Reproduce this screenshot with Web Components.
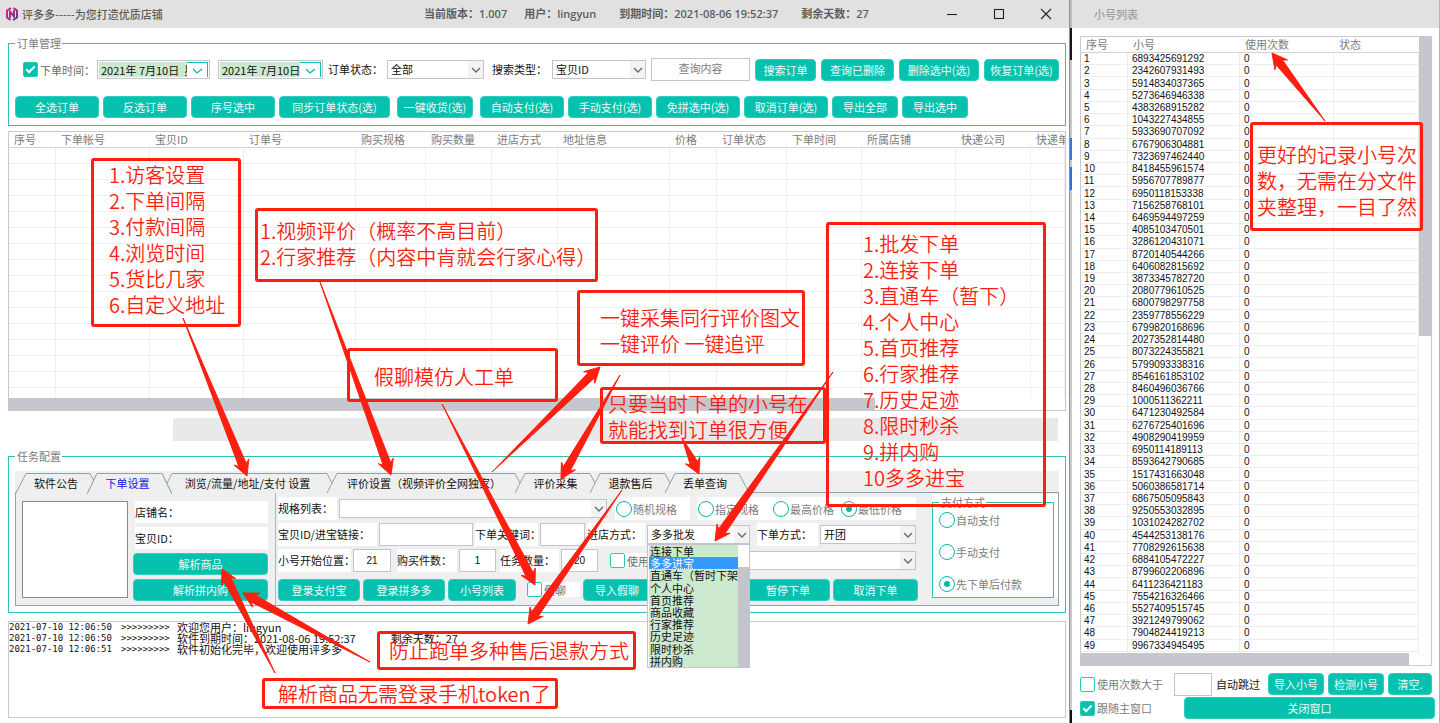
<!DOCTYPE html>
<html lang="zh-CN">
<head>
<meta charset="utf-8">
<title>评多多</title>
<style>
  html, body { margin: 0; padding: 0; }
  body { background: #fff; font: 11px/14px "Noto Sans CJK SC", "Liberation Sans", sans-serif; color: #6b6b6b; }
</style>
</head>
<body>
<desktop-view></desktop-view>

<script>
const BASE = `<style>
  *, *::before, *::after { box-sizing: border-box; }
  :host { display: block; box-sizing: border-box; }
  :host([hidden]) { display: none; }
  button, input, select { font: inherit; margin: 0; }
</style>`;

function define(name, html, setup) {
  const template = document.createElement('template');
  template.innerHTML = BASE + html;
  customElements.define(name, class extends HTMLElement {
    connectedCallback() {
      if (this.shadowRoot) return;
      const root = this.attachShadow({ mode: 'open' });
      root.append(template.content.cloneNode(true));
      for (const key of ['w', 'lw', 'ml', 'h']) {
        if (this.hasAttribute(key)) this.style.setProperty('--' + key, this.getAttribute(key) + 'px');
      }
      if (setup) setup(this, root);
    }
  });
}

/* ---------- small controls ---------- */

define('teal-button', `<style>
  :host { width: var(--w, auto); height: 22px; margin-left: var(--ml, 0); flex: none; }
  button { display: block; width: 100%; height: 100%; padding: 0; border: 1px solid #2fcdbd; border-radius: 4px;
    background: #06c1ae; color: #effcfa; line-height: 20px; text-align: center; white-space: nowrap; }
</style><button type="button"><slot></slot></button>`);

define('check-box', `<style>
  :host { width: var(--w, auto); margin-left: var(--ml, 0); flex: none; background: var(--bg, transparent); }
  label { display: flex; align-items: center; gap: 2px; height: 100%; white-space: nowrap; }
  input { appearance: none; flex: none; width: 15px; height: 15px; border: 1px solid #27c8b8; border-radius: 2px;
    background: #fff; display: grid; place-items: center; }
  input:checked { background: #06c1ae; }
  input:checked::after { content: ""; width: 9px; height: 5px; border: solid #fff; border-width: 0 0 2px 2px;
    transform: translateY(-1px) rotate(-45deg); }
</style><label><input type="checkbox"><slot></slot></label>`, (el, root) => {
  root.querySelector('input').checked = el.hasAttribute('checked');
});

define('radio-dot', `<style>
  :host { flex: none; width: var(--w, auto); }
  label { display: flex; align-items: center; gap: 1px; white-space: nowrap; color: #7c7c7c; }
  input { appearance: none; flex: none; width: 16px; height: 16px; border: 1px solid #06b8a6; border-radius: 50%;
    background: #fff; display: grid; place-items: center; }
  input:checked::after { content: ""; width: 6px; height: 6px; border-radius: 50%; background: #06b8a6; }
</style><label><input type="radio"><slot></slot></label>`, (el, root) => {
  root.querySelector('input').checked = el.hasAttribute('checked');
});

define('form-field', `<style>
  :host { display: flex; align-items: center; flex: none; gap: var(--gap, 0px); margin-left: var(--ml, 0); color: #111; }
  label { width: var(--lw, auto); height: 23px; line-height: 23px; white-space: nowrap; background: var(--bg, transparent); }
  .control { position: relative; width: var(--w, 90px); }
  input { display: block; width: 100%; height: 23px; border: 1px solid #c4c4cd; background: #fff; padding: 0 4px;
    text-align: center; font: 10px "Liberation Sans", "Noto Sans CJK SC", sans-serif; color: #111; }
  input::placeholder { font: 11px "Noto Sans CJK SC", sans-serif; color: #7c7c7c; }
  .drop { display: none; position: relative; }
  select { appearance: none; display: block; width: 100%; height: 19px; border: 1px solid #c4c4cd; border-radius: 0;
    background: #fff; padding: 0 20px 0 3px; line-height: 17px; color: #111; }
  .drop svg { position: absolute; right: 1px; top: 1px; width: 15px; height: 17px; background: #f3f3f3; pointer-events: none; }
  :host([kind=select]) .drop { display: block; }
  :host([kind=select]) input, :host([kind=blank]) .control, :host([label=""]) label { display: none; }
</style>
<label></label>
<div class="control">
  <input type="text">
  <div class="drop"><select></select>
    <svg viewBox="0 0 15 17"><path d="M4 7l4 4 4-4" fill="none" stroke="#6a6a6a" stroke-width="1.4"/></svg></div>
  <slot name="popup"></slot>
</div>`, (el, root) => {
  const isSelect = el.getAttribute('kind') === 'select';
  const control = root.querySelector(isSelect ? 'select' : 'input');
  const label = root.querySelector('label');
  const text = el.getAttribute('label') || '';
  control.id = 'control';
  label.htmlFor = 'control';
  label.textContent = text;
  if (!text) control.setAttribute('aria-label', el.getAttribute('hint') || '输入');
  const value = el.getAttribute('value') || '';
  if (isSelect) control.add(new Option(value, value));
  else { control.value = value; control.placeholder = el.getAttribute('placeholder') || ''; }
  root.querySelector(isSelect ? 'input' : '.drop').remove();
});

define('date-field', `<style>
  :host { flex: none; width: var(--w); height: 19px; margin-left: var(--ml, 0); border: 1px solid #c4c4cd; padding: 1px; }
  div { display: flex; height: 100%; }
  input { flex: 1; min-width: 0; border: 0; padding: 0 0 0 2px; background: #cce8cf; color: #111; height: 15px; }
  button { flex: none; width: 21px; height: 15px; padding: 0; background: #fff; border: solid #06c1ae; border-width: 1px 1px 0 0; }
  svg { display: block; width: 20px; height: 14px; }
</style><div><input type="text" aria-label="日期"><button type="button" aria-label="选择日期">
<svg viewBox="0 0 20 14"><path d="M6 6l4 4 5-4" fill="none" stroke="#06b8a6" stroke-width="1.3"/></svg></button></div>`, (el, root) => {
  root.querySelector('input').value = el.getAttribute('value');
});

define('group-box', `<style>
  fieldset { margin: 0; min-width: 0; border: 1px solid #2cc4b4; padding: 0 6px; }
  legend { height: 12px; line-height: 12px; padding: 0 1px 0 2px; color: #7c7c7c; }
</style><fieldset><legend></legend><slot></slot></fieldset>`, (el, root) => {
  root.querySelector('legend').textContent = el.getAttribute('caption');
});

/* ---------- tabs ---------- */

define('tab-item', `<style>
  :host { flex: none; position: relative; margin-right: -10px; height: 20px; }
  :host([selected]) { z-index: 1; height: 21px; }
  button { display: flex; width: 100%; height: 100%; border: 0; padding: 0; background: none; color: #111; }
  :host([selected]) button { color: #1616f0; }
  svg { flex: none; width: 10px; height: 100%; }
  span { flex: 1; padding: 0 12px 0 8px; border-top: 1px solid #8ba3b0; background: #efefef; line-height: 19px; white-space: nowrap; text-align: center; }
  path { fill: #efefef; stroke: none; }
  polyline { fill: none; stroke: #8ba3b0; }
</style><button type="button" role="tab">
<svg viewBox="0 0 10 20" preserveAspectRatio="none"><path d="M0 20L10 0V20z"/><polyline points="0,20 10,0.5"/></svg>
<span><slot></slot></span>
<svg viewBox="0 0 10 20" preserveAspectRatio="none"><path d="M0 0L10 20H0z"/><polyline points="0,0.5 10,20"/></svg>
</button>`, (el, root) => {
  if (el.hasAttribute('w')) el.style.width = 'var(--w)';
  root.querySelector('button').setAttribute('aria-selected', el.hasAttribute('selected'));
});

define('option-list', `<style>
  :host { position: absolute; z-index: 5; left: 0; right: 0; top: 19px; height: 124px; display: flex;
    border: 1px solid #c4c4cd; background: #fff; color: #111; }
  ul { list-style: none; margin: 0; padding: 0 0 0 1px; flex: 1; min-width: 0; overflow: hidden; display: grid; grid-auto-rows: 1fr; }
  li { background: #cce8cf; line-height: 12px; padding-left: 1px; white-space: nowrap; overflow: hidden; }
  li[aria-selected=true] { background: #3399ff; color: #fff; outline: 1px dotted #d07a30; outline-offset: -1px; }
  .bar { width: 11px; padding-top: 22px; }
  .bar i { display: block; height: 100%; background: #c4c4cc; }
</style><ul role="listbox" aria-label="进店方式"></ul><div class="bar"><i></i></div>`, (el, root) => {
  root.querySelector('ul').innerHTML = ['连接下单', '多多进宝', '直通车（暂时下架）', '个人中心', '首页推荐', '商品收藏', '行家推荐', '历史足迹', '限时秒杀', '拼内购']
    .map((t, i) => `<li role="option" aria-selected="${i === 1}">${t}</li>`).join('');
});

/* ---------- order table ---------- */

define('order-table', `<style>
  :host { display: flex; flex-direction: column; height: 280px; border: 1px solid #c9c9d1; overflow: hidden; }
  .view { flex: 1; min-height: 0; overflow: hidden; }
  table { width: 100%; table-layout: fixed; border-collapse: separate; border-spacing: 0; }
  th { height: 16px; padding: 0 0 0 5px; font-weight: 400; line-height: 15px; text-align: left; white-space: nowrap;
    overflow: hidden; border-bottom: 1px solid #d4d4d8; color: #7c7c7c; }
  td { height: 16px; padding: 0; border: solid #efefef; border-width: 0 1px 1px 0; }
  .bar { flex: none; width: 82%; height: 12px; background: #c6c6cd; }
</style><div class="view"><table><colgroup></colgroup><thead><tr></tr></thead><tbody></tbody></table></div><div class="bar"></div>`, (el, root) => {
  const cols = [['序号', 47], ['下单帐号', 94], ['宝贝ID', 94], ['订单号', 112], ['购买规格', 70], ['购买数量', 66], ['进店方式', 66],
    ['地址信息', 112], ['价格', 47], ['订单状态', 70], ['下单时间', 75], ['所属店铺', 94], ['快递公司', 75], ['快递单', 0]];
  root.querySelector('colgroup').innerHTML = cols.map(c => c[1] ? `<col style="width:${c[1]}px">` : '<col>').join('');
  root.querySelector('thead tr').innerHTML = cols.map(c => `<th scope="col">${c[0]}</th>`).join('');
  root.querySelector('tbody').innerHTML = `<tr>${'<td></td>'.repeat(cols.length)}</tr>`.repeat(16);
});

/* ---------- account table ---------- */

define('account-table', `<style>
  :host { display: flex; height: 630px; border: 1px solid #c9c9d1; overflow: hidden; }
  .main { flex: 1; min-width: 0; display: flex; flex-direction: column; }
  .view { flex: 1; min-height: 0; overflow: hidden; }
  table { width: 100%; table-layout: fixed; border-collapse: separate; border-spacing: 0; }
  th { height: 16px; padding: 0 0 0 5px; font-weight: 400; line-height: 15px; text-align: left; border-bottom: 1px solid #d4d4d8; color: #7c7c7c; }
  td { padding: 0 0 0 4px; font: 10px/11px "Liberation Sans", sans-serif; color: #111; border: solid #ededed; border-width: 0 1px 1px 0; }
  td:first-child { padding-left: 3px; }
  .h { flex: none; height: 12px; width: 97%; background: #c6c6cd; }
  .v { flex: none; width: 12px; }
  .v i { display: block; height: 299px; background: #c6c6cd; }
</style><div class="main"><div class="view"><table><colgroup><col style="width:47px"><col style="width:112px"><col style="width:94px"><col></colgroup>
<thead><tr><th scope="col">序号</th><th scope="col">小号</th><th scope="col">使用次数</th><th scope="col">状态</th></tr></thead><tbody></tbody></table></div><div class="h"></div></div><div class="v"><i></i></div>`, (el, root) => {
  const ids = `6893425691292 2342607931493 5914834037365 5273646946338 4383268915282 1043227434855 5933690707092 6767906304881
    7323697462440 8418455961574 5956707789877 6950118153338 7156258768101 6469594497259 4085103470501 3286120431071 8720140544266
    6406082815692 3873345782720 2080779610525 6800798297758 2359778556229 6799820168696 2027352814480 8073224355821 5799093338316
    8546161853102 8460496036766 1000511362211 6471230492584 6276725401696 4908290419959 6950114189113 8593642790685 1517431663048
    5060386581714 6867505095843 9250553032895 1031024282702 4544253138176 7708292615638 6884105472227 8799602206896 6411236421183
    7554216326466 5527409515745 3921249799062 7904824419213 9967334945495 3178371114888`.split(/\s+/);
  root.querySelector('tbody').innerHTML = ids.map((id, i) => `<tr><td>${i + 1}</td><td>${id}</td><td>0</td><td></td></tr>`).join('');
  root.querySelector('table').style.height = 16 + ids.length * 12 + 11 + 'px';
});

/* ---------- log ---------- */

define('log-view', `<style>
  :host { flex: 1; min-height: 97px; border: 1px solid #c9c9d1; color: #111; }
  p { display: flex; margin: 0; line-height: 11px; height: 11px; white-space: pre; }
  ol { list-style: none; margin: 0; padding: 0; }
  time { width: 112px; font: 9px/11px "DejaVu Sans Mono", monospace; }
  i { width: 56px; font: 9px/11px "DejaVu Sans Mono", monospace; }
  .tail { margin-left: 35px; }
</style><ol>
<li><p><time>2021-07-10 12:06:50</time><i>&gt;&gt;&gt;&gt;&gt;&gt;&gt;&gt;&gt;</i><span>欢迎您用户：lingyun</span></p></li>
<li><p><time>2021-07-10 12:06:50</time><i>&gt;&gt;&gt;&gt;&gt;&gt;&gt;&gt;&gt;</i><span>软件到期时间：2021-08-06 19:52:37</span><span class="tail">剩余天数：27</span></p></li>
<li><p><time>2021-07-10 12:06:51</time><i>&gt;&gt;&gt;&gt;&gt;&gt;&gt;&gt;&gt;</i><span>软件初始化完毕，欢迎使用评多多</span></p></li>
</ol>`);

/* ---------- title bar ---------- */

define('title-bar', `<style>
  :host { display: flex; align-items: center; height: 28px; background: #e1e1e1; padding: 0 8px 0 6px; color: #5e5e5e; font-weight: 500; }
  .logo { width: 12px; height: 14px; margin-right: 4px; }
  .name { width: 402px; white-space: nowrap; }
  .facts { display: flex; gap: 23px; flex: 1; white-space: nowrap; font: 600 11px/14px "Open Sans", "Noto Sans CJK SC", sans-serif; }
  .facts span:first-child { margin-right: -6px; }
  nav { display: flex; gap: 17px; }
  nav button { width: 30px; height: 26px; border: 0; padding: 0; background: none; }
  nav svg { display: block; width: 30px; height: 26px; fill: none; stroke: #222; stroke-width: 1.1; }
</style>
<svg class="logo" viewBox="0 0 12 14"><defs><linearGradient id="g" x1="0" y1="0" x2="1" y2="1"><stop offset="0" stop-color="#e0246a"/><stop offset="1" stop-color="#5a2aa0"/></linearGradient></defs>
<path d="M5 1L1 3.500v7L4.500 13M7 13l4-2.500v-7L7.500 1M4 11V4.500l4 5V3" fill="none" stroke="url(#g)" stroke-width="1.9"/></svg>
<span class="name">评多多-----为您打造优质店铺</span>
<div class="facts"><span>当前版本：1.007</span><span>用户：lingyun</span><span>到期时间：2021-08-06 19:52:37</span><span>剩余天数：27</span></div>
<nav>
<button type="button" aria-label="最小化"><svg viewBox="0 0 30 26"><path d="M10 13.500h10"/></svg></button>
<button type="button" aria-label="最大化"><svg viewBox="0 0 30 26"><rect x="10.500" y="8.500" width="9" height="9"/></svg></button>
<button type="button" aria-label="关闭"><svg viewBox="0 0 30 26"><path d="M10 8l10 10M20 8L10 18"/></svg></button>
</nav>`);

/* ---------- task settings panel ---------- */

define('task-panel', `<style>
  :host { background: #efefef; padding: 2px 0 0; }
  [role=tablist] { display: flex; height: 19px; padding-left: 1px; }
  .sheet { display: grid; grid-template-columns: 259px minmax(0, 1fr) 126px; height: 114px; border: 1px solid #8ba3b0; background: #efefef; }
  .product { display: grid; grid-template-columns: 106px 135px; column-gap: 5px; padding: 8px 0 0 6px; align-items: start; }
  .picture { height: 97px; background: #fff; border: 1px solid #8a8a8a; }
  .stack { display: grid; grid-auto-rows: 22px; row-gap: 4px; }
  .stack p { margin: 0 0 0 2px; background: #fff; color: #111; line-height: 22px; }
  .order { border-left: 1px solid #a9b9c2; padding: 4px 0 0 2px; display: flex; flex-direction: column; gap: 3px; --bg: #fff; --gap: 2px; }
  .row { display: flex; gap: 2px; align-items: center; height: 23px; }
  .radios { display: flex; align-items: center; height: 23px; background: #fff; }
  .radios.one { width: 75px; margin-left: 6px; padding-left: 1px; }
  .radios.three { width: 219px; margin-left: 5px; padding-left: 1px; }
  .actions { gap: 3px; margin-top: 3px; }
  .pay { background: #fff; height: 104px; padding: 2px 4px 0 0; margin-top: 1px; }
  .pay div { display: flex; flex-direction: column; gap: 16px; padding: 4px 0 5px; }
</style>
<div role="tablist">
  <tab-item w="81">软件公告</tab-item><tab-item w="85" selected>下单设置</tab-item><tab-item w="175">浏览/流量/地址/支付 设置</tab-item>
  <tab-item w="198">评价设置（视频评价全网独家）</tab-item><tab-item w="85">评价采集</tab-item><tab-item w="85">退款售后</tab-item><tab-item w="80">丢单查询</tab-item>
</div>
<div class="sheet">
  <div class="product">
    <div class="picture"></div>
    <div class="stack"><p>店铺名：</p><p>宝贝ID：</p><teal-button>解析商品</teal-button><teal-button>解析拼内购</teal-button></div>
  </div>
  <div class="order">
    <div class="row">
      <form-field kind="select" label="规格列表：" lw="59" w="268"></form-field>
      <div class="radios one"><radio-dot>随机规格</radio-dot></div>
      <div class="radios three"><radio-dot w="75">指定规格</radio-dot><radio-dot w="68">最高价格</radio-dot><radio-dot checked>最低价格</radio-dot></div>
    </div>
    <div class="row">
      <form-field label="宝贝ID/进宝链接：" lw="99" w="94"></form-field>
      <form-field label="下单关键词：" lw="63" w="45"></form-field>
      <form-field kind="select" label="进店方式：" lw="58" w="103" value="多多批发"><option-list slot="popup"></option-list></form-field>
      <form-field kind="select" label="下单方式：" ml="5" lw="61" w="96" value="开团"></form-field>
    </div>
    <div class="row">
      <form-field label="小号开始位置：" lw="73" w="38" value="21"></form-field>
      <form-field label="购买件数：" ml="4" lw="60" w="37" value="1"></form-field>
      <form-field label="任务数量：" ml="2" lw="59" w="37" value="20"></form-field>
      <check-box ml="10" w="80" h="23">使用</check-box>
      <form-field kind="select" label="" hint="使用" w="224"></form-field>
    </div>
    <div class="row actions">
      <teal-button w="82">登录支付宝</teal-button><teal-button w="82">登录拼多多</teal-button><teal-button w="68">小号列表</teal-button>
      <check-box ml="8" w="53">假聊</check-box><teal-button w="68">导入假聊</teal-button>
      <teal-button ml="92" w="84">暂停下单</teal-button><teal-button w="85">取消下单</teal-button>
    </div>
  </div>
  <div class="pay"><group-box caption="支付方式"><div><radio-dot>自动支付</radio-dot><radio-dot>手动支付</radio-dot><radio-dot checked>先下单后付款</radio-dot></div></group-box></div>
</div>`);

/* ---------- windows ---------- */

define('order-window', `<style>
  :host { display: flex; flex-direction: column; background: #fff; min-width: 0; }
  main { flex: 1; display: flex; flex-direction: column; padding: 9px 3px 5px 8px; }
  .search { display: flex; align-items: center; gap: 5px; height: 23px; padding-left: 8px; margin-top: 9px; }
  .search div { display: flex; align-items: center; }
  .bulk { display: flex; gap: 7px; margin: 15px 0 7px; }
  .bulk div { display: flex; gap: 4px; }
  .strip { height: 23px; margin: 7px 8px 9px 165px; background: #e9e9e9; }
  order-table { margin-top: 5px; flex: none; }
  task-panel { margin: 9px 0 6px; }
  log-view { margin-top: 8px; }
</style>
<title-bar></title-bar>
<main>
  <group-box caption="订单管理">
    <div class="search">
      <div><check-box w="74" checked>下单时间：</check-box><date-field w="113" value="2021年 7月10日  星期六"></date-field><date-field w="105" ml="8" value="2021年 7月10日  星期六"></date-field></div>
      <form-field kind="select" label="订单状态：" lw="59" w="97" value="全部"></form-field>
      <form-field kind="select" label="搜索类型：" ml="3" lw="60" w="94" value="宝贝ID"></form-field>
      <form-field label="" hint="查询内容" placeholder="查询内容" w="99"></form-field>
      <teal-button w="61">搜索订单</teal-button><teal-button w="73">查询已删除</teal-button><teal-button w="80">删除选中(选)</teal-button><teal-button w="75">恢复订单(选)</teal-button>
    </div>
    <div class="bulk">
      <div><teal-button w="84">全选订单</teal-button><teal-button w="84">反选订单</teal-button><teal-button w="84">序号选中</teal-button><teal-button w="111">同步订单状态(选)</teal-button></div>
      <div><teal-button w="76">一键收货(选)</teal-button></div>
      <div><teal-button w="84">自动支付(选)</teal-button><teal-button w="84">手动支付(选)</teal-button><teal-button w="84">免拼选中(选)</teal-button><teal-button w="84">取消订单(选)</teal-button><teal-button w="66">导出全部</teal-button><teal-button w="66">导出选中</teal-button></div>
    </div>
  </group-box>
  <order-table></order-table>
  <div class="strip"></div>
  <group-box caption="任务配置"><task-panel></task-panel></group-box>
  <log-view></log-view>
</main>`);

define('account-window', `<style>
  :host { display: flex; flex-direction: column; background: #fff; border-right: 1px solid #b5b5b5; }
  h2 { margin: 0; height: 28px; padding-left: 22px; background: #e1e1e1; font: inherit; font-weight: 500; line-height: 28px; color: #a0a0a0; }
  main { padding: 8px 4px 4px 8px; }
  account-table { margin-right: 3px; }
  .row { display: flex; align-items: center; height: 22px; color: #7c7c7c; }
  .first { margin: 7px 3px 2px 0; gap: 4px; }
  .first label { color: #111; width: 48px; white-space: nowrap; }
  .first input { width: 38px; height: 23px; border: 1px solid #c4c4cd; margin-left: -4px; padding: 0 3px; }
  .wide { flex: 1; }
</style>
<h2>小号列表</h2>
<main>
  <account-table></account-table>
  <div class="row first"><check-box w="94">使用次数大于</check-box><input type="text" id="limit"><label for="limit">自动跳过</label>
    <teal-button w="56">导入小号</teal-button><teal-button w="56">检测小号</teal-button><teal-button w="44">清空.</teal-button></div>
  <div class="row"><check-box w="104" checked>跟随主窗口</check-box><teal-button class="wide">关闭窗口</teal-button></div>
</main>`);

/* ---------- annotations lying over the windows ---------- */

define('callout-note', `<style>
  :host { position: absolute; border: 3px solid #ff1e10; border-radius: 3px; color: #ff1e10;
    font: 350 20px/26px "Noto Sans CJK SC", sans-serif; white-space: pre; }
</style><slot></slot>`, (el) => {
  const [x, y, w, h, padX, padY] = el.getAttribute('box').split(' ');
  Object.assign(el.style, { left: x + 'px', top: y + 'px', width: w + 'px', height: h + 'px', paddingLeft: padX + 'px', paddingTop: padY + 'px' });
});

define('arrow-layer', `<style>
  :host { position: absolute; left: 0; top: 0; }
  svg { display: block; width: 1440px; height: 723px; fill: #ff1e10; stroke: #ff1e10; stroke-width: 1; }
</style><svg viewBox="0 0 1440 723" aria-hidden="true"></svg>`, (el, root) => {
  const arrows = [[183, 318, 247, 476], [320, 282, 391, 475], [442, 404, 535, 585], [492, 472, 600, 367], [620, 375, 561, 479],
    [622, 490, 528, 624], [682, 438, 699, 474], [833, 372, 715, 541], [275, 673, 222, 569], [370, 662, 243, 593], [1325, 121, 1272, 53]];
  root.querySelector('svg').innerHTML = arrows.map(([x1, y1, x2, y2]) => {
    const len = Math.hypot(x2 - x1, y2 - y1), ux = (x2 - x1) / len, uy = (y2 - y1) / len;
    const at = (back, side) => `${(x2 - ux * back - uy * side).toFixed(1)},${(y2 - uy * back + ux * side).toFixed(1)}`;
    return `<polygon points="${[`${x1},${y1}`, at(12, 4), at(15, 8), at(0, 0), at(15, -8), at(12, -4)].join(' ')}"/>`;
  }).join('');
});

define('desktop-view', `<style>
  :host { position: relative; display: grid; grid-template-columns: minmax(0, 1fr) 3px 368px; min-height: 100vh; overflow: hidden; }
  .edge { border-left: 1px solid #8f8f8f; background: linear-gradient(#bdbdc2 28px, #151520 28px 60px, #c9c9c9 60px 138px, #3a78d8 138px 160px,
    #c9c9c9 160px 167px, #2f6fd6 167px 190px, #c9c9c9 190px 710px, #101018 710px); }
</style>
<order-window></order-window><div class="edge"></div><account-window></account-window>
<callout-note box="91 158 150 169 15 1">1.访客设置
2.下单间隔
3.付款间隔
4.浏览时间
5.货比几家
6.自定义地址</callout-note>
<callout-note box="255 208 343 74 2 7">1.视频评价（概率不高目前）
2.行家推荐（内容中肯就会行家心得）</callout-note>
<callout-note box="347 348 211 54 24 13">假聊模仿人工单</callout-note>
<callout-note box="577 290 228 76 20 12">一键采集同行评价图文
一键评价 一键追评</callout-note>
<callout-note box="600 387 226 57 5 1">只要当时下单的小号在
就能找到订单很方便</callout-note>
<callout-note box="826 222 220 285 34 6">1.批发下单
2.连接下单
3.直通车（暂下）
4.个人中心
5.首页推荐
6.行家推荐
7.历史足迹
8.限时秒杀
9.拼内购
10多多进宝</callout-note>
<callout-note box="377 631 259 39 9 4">防止跑单多种售后退款方式</callout-note>
<callout-note box="262 678 296 31 13 0">解析商品无需登录手机token了</callout-note>
<callout-note box="1250 122 173 109 4 17">更好的记录小号次
数，无需在分文件
夹整理，一目了然</callout-note>
<arrow-layer></arrow-layer>`);
</script>
</body>
</html>
